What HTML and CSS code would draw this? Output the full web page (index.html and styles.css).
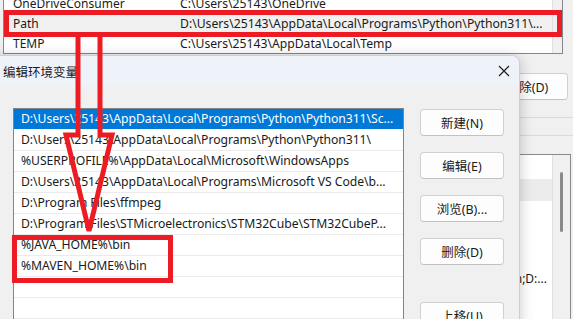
FILE: index.html
```html
<!DOCTYPE html>
<html lang="zh-CN">
<head>
    <meta charset="UTF-8">
    <title>编辑环境变量</title>
    <link rel="stylesheet" href="styles.css">
</head>
<body>
<div class="desk">
    <!-- background: environment variables window -->
    <div class="bg-window">
        <div class="var-list user">
            <div class="var-rows">
                <div class="var-row"><span class="var-name">OneDriveConsumer</span><span class="var-value">C:\Users\25143\OneDrive</span></div>
                <div class="var-row picked"><span class="var-name">Path</span><span class="var-value">D:\Users\25143\AppData\Local\Programs\Python\Python311\...</span></div>
                <div class="var-row"><span class="var-name">TEMP</span><span class="var-value">C:\Users\25143\AppData\Local\Temp</span></div>
            </div>
            <div class="scroll-strip"></div>
        </div>
        <div class="bg-actions">
            <button class="win-btn">删除(D)</button>
        </div>
        <div class="bg-rule"></div>
        <div class="bg-rule second"></div>
        <div class="var-list sys">
            <div class="var-rows">
                <div class="sys-row first"></div>
                <div class="sys-row picked"></div>
                <div class="sys-row"></div>
                <div class="sys-row"></div>
                <div class="sys-row"></div>
                <div class="sys-row"><span>Git\bin;D:...</span></div>
            </div>
            <div class="scroll-strip"><div class="thumb"></div></div>
        </div>
    </div>

    <!-- edit dialog on top -->
    <div class="dialog">
        <div class="dialog-title">
            <span>编辑环境变量</span>
            <svg class="close" width="12" height="12" viewBox="0 0 12 12">
                <path d="M1 1 L11 11 M11 1 L1 11" stroke="#1a1a1a" stroke-width="1.1" fill="none"/>
            </svg>
        </div>
        <div class="dialog-body">
            <div class="path-list">
                <div class="path-row selected">D:\Users\25143\AppData\Local\Programs\Python\Python311\Sc...</div>
                <div class="path-row">D:\Users\25143\AppData\Local\Programs\Python\Python311\</div>
                <div class="path-row">%USERPROFILE%\AppData\Local\Microsoft\WindowsApps</div>
                <div class="path-row">D:\Users\25143\AppData\Local\Programs\Microsoft VS Code\b...</div>
                <div class="path-row">D:\Program Files\ffmpeg</div>
                <div class="path-row">D:\Program Files\STMicroelectronics\STM32Cube\STM32CubeP...</div>
                <div class="path-row">%JAVA_HOME%\bin</div>
                <div class="path-row">%MAVEN_HOME%\bin</div>
                <div class="path-row"></div>
                <div class="path-row"></div>
            </div>
            <div class="dialog-buttons">
                <button class="win-btn">新建(N)</button>
                <button class="win-btn">编辑(E)</button>
                <button class="win-btn">浏览(B)...</button>
                <button class="win-btn">删除(D)</button>
                <button class="win-btn group">上移(U)</button>
            </div>
        </div>
    </div>

    <!-- red annotations -->
    <svg class="marks" width="573" height="319" viewBox="0 0 573 319">
        <rect x="6.5" y="12.5" width="553" height="22" fill="none" stroke="#ed1c24" stroke-width="5"/>
        <rect x="14.5" y="237.5" width="156" height="43" fill="none" stroke="#ed1c24" stroke-width="5"/>
        <path d="M78 37 V135 H66 L89 231 L112 135 H100 V37" fill="none" stroke="#ed1c24" stroke-width="5" stroke-linejoin="miter"/>
    </svg>
</div>
</body>
</html>
```

FILE: styles.css
```css
/* page */
body {
    margin: 0;
    font-family: "Noto Sans", "Noto Sans CJK SC", sans-serif;
    font-size: 12px;
    color: #1a1a1a;
}

.desk {
    position: relative;
    width: 573px;
    height: 319px;
    overflow: hidden;
    background: #f0f0f0;
}

/* background window */
.bg-window {
    height: 100%;
}

.var-list {
    display: flex;
    background: #fff;
    border: 1px solid #828790;
}

.var-list.user {
    margin: -7px 10px 0 3px;
    height: 60px;
    border-top: none;
}

.var-rows {
    flex: 1;
    overflow: hidden;
}

.var-row {
    display: flex;
    height: 20px;
    align-items: center;
    white-space: nowrap;
}

.var-row.picked {
    background: #f0f0f0;
}

.var-name {
    width: 167px;
    padding-left: 9px;
}

.var-value {
    font-size: 12.2px;
}

.scroll-strip {
    width: 9px;
    background: #f0f0f0;
    border-left: 1px solid #e0e0e0;
    position: relative;
}

.bg-actions {
    display: flex;
    justify-content: flex-end;
    margin-top: 19px;
    padding-right: 5px;
}

.win-btn {
    width: 84px;
    height: 27px;
    padding: 0;
    font: inherit;
    font-size: 12.5px;
    color: #1a1a1a;
    background: #fdfdfd;
    border: 1px solid #d0d0d0;
    border-bottom-color: #c2c2c2;
    border-radius: 4px;
}

.bg-actions .win-btn {
    width: 81px;
}

.bg-rule {
    height: 1px;
    margin-top: 17px;
    background: #d9d9d9;
}

.bg-rule.second {
    margin-top: 17px;
}

.var-list.sys {
    margin: 18px 0 0 470px;
    width: 99px;
    height: 170px;
    border-color: #8a8a8a;
}

.var-list.sys .scroll-strip {
    width: 17px;
}

.thumb {
    position: absolute;
    left: 7px;
    top: 17px;
    width: 3px;
    height: 60px;
    border-radius: 2px;
    background: #8a8a8a;
}

.sys-row {
    display: flex;
    justify-content: flex-end;
    align-items: center;
    height: 22px;
    padding-right: 5px;
    white-space: nowrap;
}

.sys-row.first {
    height: 24px;
}

.sys-row.picked {
    background: #ececec;
}

/* edit dialog */
.dialog {
    position: absolute;
    left: -9px;
    top: 55px;
    width: 527px;
    bottom: -20px;
    background: #f0f0f0;
    border: 1px solid #cfcfcf;
    border-radius: 0 8px 0 0;
    box-shadow: 0 2px 14px rgba(0, 0, 0, 0.22);
}

.dialog-title {
    display: flex;
    align-items: center;
    justify-content: space-between;
    height: 30px;
    padding: 0 9px 0 11px;
    font-size: 12.5px;
    background: #eef3fa;
    border-radius: 0 8px 0 0;
}

.close {
    display: block;
}

.dialog-body {
    display: flex;
    gap: 16px;
    padding: 22px 0 0 21px;
}

.path-list {
    width: 389px;
    height: 240px;
    background: #fff;
    border: 1px solid #838383;
}

.path-row {
    height: 20px;
    line-height: 20px;
    padding-left: 7px;
    font-size: 12.2px;
    letter-spacing: -0.05px;
    border-bottom: 1px solid #ebebeb;
    white-space: nowrap;
    overflow: hidden;
}

.path-row.selected {
    background: #0078d7;
    color: #fff;
    border-bottom-color: #fff;
}

.dialog-buttons {
    display: flex;
    flex-direction: column;
    gap: 16px;
    padding-top: 1px;
}

.dialog-buttons .win-btn.group {
    margin-top: 21px;
}

/* annotations */
.marks {
    position: absolute;
    left: 0;
    top: 0;
    pointer-events: none;
}
```
